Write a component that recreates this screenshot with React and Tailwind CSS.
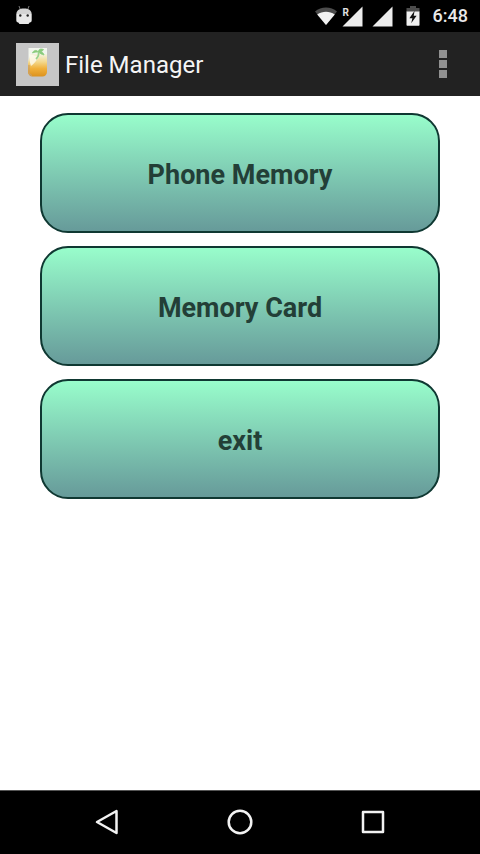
const storageItems = ['Phone Memory', 'Memory Card', 'exit'];

function RobotIcon() {
  return (
    <svg viewBox="0 0 16 20" className="w-4 h-5" aria-hidden="true">
      <path d="M3 0l1.500 4M13 0l-1.500 4" stroke="#777" strokeWidth="1" />
      <path d="M0.300 8C0.800 4 3.500 2.500 8 2.500s7.200 1.500 7.700 5.500z" fill="#d4d4d4" />
      <path d="M0.300 8h15.400v6.500a2 2 0 0 1-2 2L12.500 18h-9l-1.200-1.500a2 2 0 0 1-2-2z" fill="#e8e8e8" />
      <circle cx="4.300" cy="9.500" r="1.200" fill="#222" />
      <circle cx="11.700" cy="9.500" r="1.200" fill="#222" />
    </svg>
  );
}

function WifiIcon() {
  return (
    <svg viewBox="0 0 24 20" className="w-6 h-5" aria-hidden="true">
      <path d="M1 5.500C7 0.300 17 0.300 23 5.500L12 19z" fill="#4c4c4c" />
      <path d="M3.200 8.400C8.500 4.800 15.500 4.800 20.800 8.400L12 19z" fill="#f2f2f2" />
    </svg>
  );
}

function SignalIcon({ roaming }) {
  return (
    <svg viewBox="0 0 21 21" className="w-[21px] h-[21px]" aria-hidden="true">
      <path d="M20.500 0.500v20H0.500z" fill="#ececec" />
      {roaming && (
        <text x="0.500" y="9.500" fill="#e0e0e0" fontSize="10" fontWeight="700" fontFamily="Roboto, sans-serif">R</text>
      )}
    </svg>
  );
}

function BatteryIcon() {
  return (
    <svg viewBox="0 0 14 20" className="w-3.5 h-5" aria-hidden="true">
      <path d="M4 0h6v2h3.500v4H0.500V2H4z" fill="#4c4c4c" />
      <path d="M0.500 5.500h13V19a0.700 0.700 0 0 1-0.700 0.700H1.200A0.700 0.700 0 0 1 0.500 19z" fill="#f0f0f0" />
      <path d="M8.600 4.800L3.400 12.200h3L5.200 17.200l5.400-7.400H7.700z" fill="#111" />
    </svg>
  );
}

function StatusBar() {
  return (
    <div className="h-8 bg-black flex items-center pl-4 pr-3">
      <RobotIcon />
      <div className="ml-auto flex items-center">
        <WifiIcon />
        <div className="flex gap-[9px] ml-1">
          <SignalIcon roaming />
          <SignalIcon />
        </div>
        <div className="flex items-center gap-[13px] ml-[13px]">
          <BatteryIcon />
          <span className="text-lg leading-8 font-medium text-[#e8e8e8]">6:48</span>
        </div>
      </div>
    </div>
  );
}

// Glass of orange juice on a grey tile
function AppIcon() {
  return (
    <svg viewBox="0 0 43 43" className="w-[43px] h-[43px]" aria-hidden="true">
      <defs>
        <linearGradient id="juice" x1="0" y1="0" x2="0" y2="1">
          <stop offset="0" stopColor="#f3f4e0" />
          <stop offset="0.350" stopColor="#f3d88c" />
          <stop offset="0.650" stopColor="#f0b03a" />
          <stop offset="1" stopColor="#dc921e" />
        </linearGradient>
      </defs>
      <rect width="43" height="43" fill="#c6c6c6" />
      <rect x="12.500" y="5" width="18.500" height="20" fill="#f2f6ee" />
      <path d="M14 11c0 3-2 6-2 10v8a4.500 4.500 0 0 0 4.500 4.500h10A4.500 4.500 0 0 0 31 29V11z" fill="url(#juice)" />
      <path d="M13 22v6.500a4 4 0 0 0 3 4" stroke="#c9a066" strokeWidth="1.200" fill="none" />
      <path d="M13.500 11c-0.300 4 0 8 1.500 12 3-2 5-5 8-9z" fill="#fcfbf0" opacity="0.800" />
      <path d="M22.500 9c-2-2.500-5-2-6 1 2-1 4-1 6-1zM22.500 9c0-3 2-3.500 5-2.500-1 2-3 2.500-5 2.500zM22.500 9c3-1 5 0.500 5.500 3-2-0.500-4-1.500-5.500-3z" fill="#8acb7c" stroke="#8acb7c" strokeWidth="0.800" />
      <path d="M22.500 9c0.500 3-0.200 5-2.500 7" stroke="#9ad28c" strokeWidth="1.800" fill="none" />
    </svg>
  );
}

function ActionBar() {
  return (
    <header className="h-16 bg-[#222222] flex items-center gap-1.5 pl-4 pr-6">
      <AppIcon />
      <h1 className="pt-0.5 text-2xl text-[#f5f5f5]">File Manager</h1>
      <button type="button" aria-label="More options" className="ml-auto w-[26px] h-12 flex flex-col items-center justify-center gap-[2px]">
        <span className="w-2 h-2 bg-[#919191]" />
        <span className="w-2 h-2 bg-[#919191]" />
        <span className="w-2 h-2 bg-[#919191]" />
      </button>
    </header>
  );
}

function NavBar() {
  return (
    <nav className="h-16 bg-black border-t border-[#555555] px-10 pb-0.5 flex items-stretch">
      <button type="button" aria-label="Back" className="flex-1 flex items-center justify-center">
        <svg viewBox="0 0 26 26" className="w-[26px] h-[26px]" fill="none" stroke="#f2f2f2" strokeWidth="2.500" strokeLinejoin="round">
          <path d="M3 13L22.500 2v22z" />
        </svg>
      </button>
      <button type="button" aria-label="Home" className="flex-1 flex items-center justify-center">
        <svg viewBox="0 0 26 26" className="w-[26px] h-[26px]" fill="none" stroke="#f2f2f2" strokeWidth="2.500">
          <circle cx="13" cy="13" r="11.300" />
        </svg>
      </button>
      <button type="button" aria-label="Recent apps" className="flex-1 flex items-center justify-center">
        <svg viewBox="0 0 26 26" className="w-[26px] h-[26px]" fill="none" stroke="#f2f2f2" strokeWidth="2.500" strokeLinejoin="round">
          <rect x="3" y="3" width="20" height="20" />
        </svg>
      </button>
    </nav>
  );
}

export default function App() {
  return (
    <div className="min-h-screen flex flex-col bg-white font-[Roboto,sans-serif]">
      <StatusBar />
      <ActionBar />
      <main className="flex-1 flex flex-col gap-[13px] px-10 py-[17px]">
        {storageItems.map((label) => (
          <button
            key={label}
            type="button"
            className="h-[120px] pt-1 rounded-[28px] border-2 border-[#0f3832] bg-linear-to-b from-[#99ffcc] to-[#669999] bg-origin-border text-[27px] leading-8 font-bold text-[#233f37]"
          >
            {label}
          </button>
        ))}
      </main>
      <NavBar />
    </div>
  );
}
